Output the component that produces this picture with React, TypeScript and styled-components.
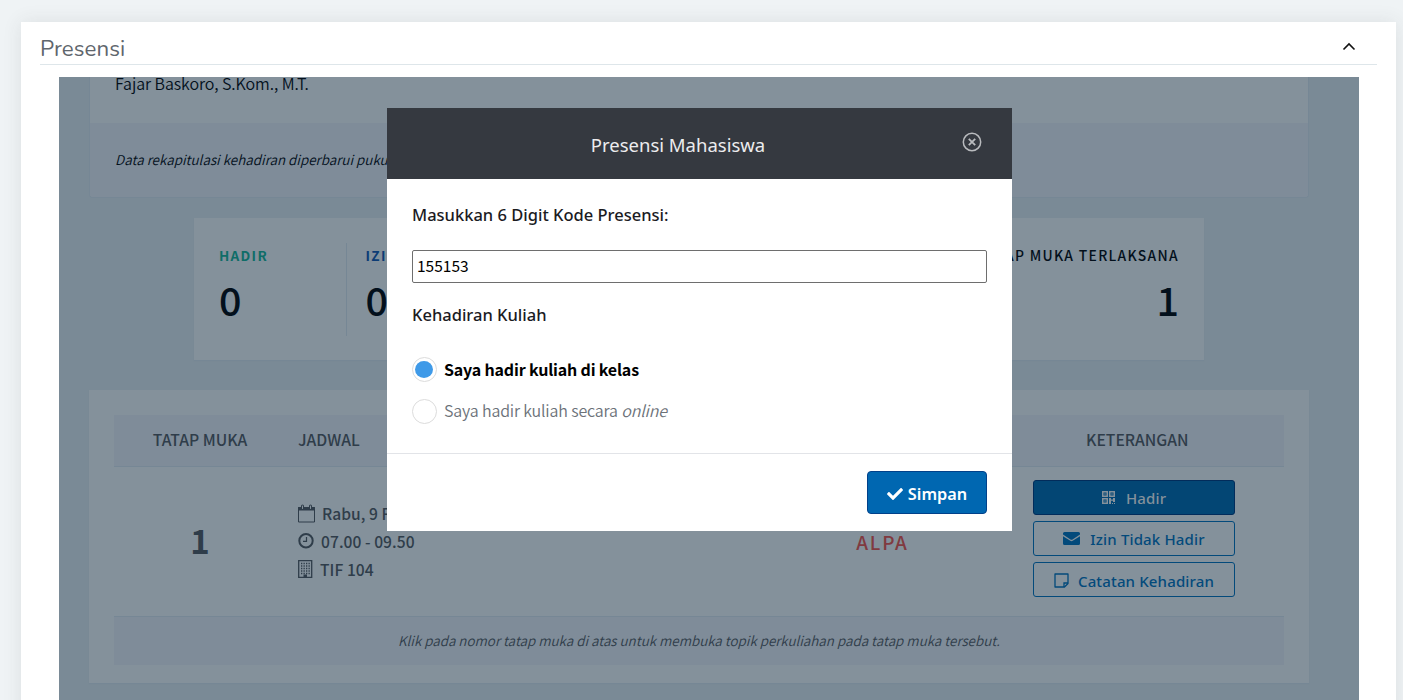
import React from "react";
import styled, { createGlobalStyle } from "styled-components";
import { FaCheck } from "react-icons/fa";

const sans = `"Noto Sans CJK SC", sans-serif`;
const ui = `"Noto Sans", "Open Sans", sans-serif`;

const GlobalStyle = createGlobalStyle`
  *, *::before, *::after { box-sizing: border-box; }
  html, body, #root { height: 100%; }
  body { margin: 0; background: #eff3f5; font-family: ${sans}; overflow: hidden; }
`;

const Page = styled.div`
  height: 100%;
  padding: 22px 7px 0 21px;
  overflow: hidden;
`;

const Panel = styled.section`
  height: 740px;
  padding: 0 19px;
  background: #fff;
  box-shadow: 0 0 18px rgba(60, 60, 60, 0.1);
`;

const PanelHeader = styled.header`
  height: 43px;
  display: flex;
  align-items: center;
  justify-content: space-between;
  padding: 9px 21px 0 0;
  border-bottom: 1px solid #dee6ea;
  svg { margin-top: -3px; }
`;

const PanelTitle = styled.h1`
  margin: 2px 0 0;
  font: 400 22.3px/32px Nunito, Lato, sans-serif;
  letter-spacing: 0.05px;
  color: #5f666d;
`;

const Viewport = styled.div`
  position: relative;
  height: 663px;
  margin: 12px 18px 0 19px;
  padding: 0 30px;
  overflow: hidden;
  background: #7a8a96;
`;

const Summary = styled.section`
  width: 1220px;
  height: 121px;
  background: #84919b;
  border: 1px solid #768795;
  border-top: 0;
  border-radius: 0 0 4px 4px;
  overflow: hidden;
`;

const Lecturer = styled.div`
  height: 46px;
  padding-left: 25px;
  font-size: 16px;
  font-weight: 350;
  line-height: 12px;
  letter-spacing: -0.07px;
  color: #03101c;
`;

const SummaryNote = styled.div`
  height: 74px;
  padding: 26px 25px;
  background: #7f8c99;
  font-size: 13.4px;
  line-height: 20px;
  letter-spacing: 0.03px;
  font-style: italic;
  font-weight: 350;
  color: #03101c;
  white-space: nowrap;
`;

const Stats = styled.section`
  display: flex;
  width: 1010px;
  height: 142px;
  margin: 20px 0 0 105px;
  padding: 25px;
  background: #84919b;
  box-shadow: 0 1px 1px #768795;
`;

const Stat = styled.div<{ $end?: boolean }>`
  width: ${(p) => (p.$end ? "auto" : "128px")};
  height: 93px;
  margin-left: ${(p) => (p.$end ? "auto" : "0")};
  margin-right: ${(p) => (p.$end ? "0" : "18.5px")};
  border-right: ${(p) => (p.$end ? "0" : "1px solid #768795")};
  text-align: ${(p) => (p.$end ? "right" : "left")};
  white-space: nowrap;
`;

const StatLabel = styled.div<{ $color: string; $strong?: boolean }>`
  height: 24px;
  font-size: ${(p) => (p.$strong ? 13.6 : 13.9)}px;
  font-weight: ${(p) => (p.$strong ? 700 : 500)};
  line-height: 24px;
  letter-spacing: 1.3px;
  color: ${(p) => p.$color};
`;

const StatValue = styled.div`
  font-size: 39.5px;
  font-weight: 500;
  line-height: 64px;
  color: #03101c;
`;

const TableCard = styled.section`
  width: 1220px;
  height: 293px;
  margin-top: 30px;
  padding: 25px;
  background: #84919b;
  box-shadow: 0 1px 1px #768795;
`;

const columns = "172px 470px 252px 1fr";

const TableHead = styled.div`
  display: grid;
  grid-template-columns: ${columns};
  align-items: center;
  height: 52px;
  padding-bottom: 2px;
  background: #7f8c99;
  border-bottom: 1px solid #768795;
  font-size: 15.7px;
  font-weight: 500;
  color: #2f3d4a;
`;

const HeadCell = styled.div<{ $align?: string; $pad?: number }>`
  padding-left: ${(p) => p.$pad ?? 0}px;
  text-align: ${(p) => p.$align ?? "center"};
  line-height: 24px;
`;

const TableRow = styled.div`
  display: grid;
  grid-template-columns: ${columns};
  align-items: center;
  height: 149px;
  padding-bottom: 3px;
  color: #2f3d4a;
`;

const Meeting = styled.div`
  text-align: center;
  font-size: 33px;
  font-weight: 700;
  line-height: 40px;
`;

const Schedule = styled.div`
  display: flex;
  flex-direction: column;
  padding: 2px 0 0 12px;
`;

const ScheduleLine = styled.div<{ $gap: number }>`
  display: flex;
  align-items: center;
  gap: ${(p) => p.$gap}px;
  height: 28px;
  font-size: 15.6px;
  font-weight: 500;
  letter-spacing: 0.05px;
`;

const Status = styled.div`
  padding: 4px 0 0 1px;
  text-align: center;
  font-size: 19px;
  font-weight: 500;
  line-height: 24px;
  letter-spacing: 1.7px;
  color: #803a40;
`;

const Actions = styled.div`
  display: flex;
  flex-direction: column;
  gap: 6px;
  width: 202px;
  margin-left: 25px;
  padding-bottom: 4px;
`;

const ActionButton = styled.button<{ $solid?: boolean; $gap: number; $drop?: number }>`
  display: flex;
  align-items: center;
  justify-content: center;
  gap: ${(p) => p.$gap}px;
  height: 35px;
  padding: ${(p) => p.$drop ?? 1}px 0 0;
  border: 1px solid ${(p) => (p.$solid ? "#022c5b" : "#034a7b")};
  border-radius: 3px;
  background: ${(p) => (p.$solid ? "#034674" : "transparent")};
  color: ${(p) => (p.$solid ? "#84919b" : "#034a7b")};
  font: 500 15px/20px ${ui};
  letter-spacing: 0.15px;
`;

const TableFooter = styled.div`
  height: 49px;
  background: #7f8c99;
  border-top: 1px solid #768795;
  text-align: center;
  font-size: 13.4px;
  font-style: italic;
  font-weight: 350;
  line-height: 47px;
  color: #2f3d4a;
`;

const Dialog = styled.div`
  position: absolute;
  top: 31px;
  left: 328px;
  width: 625px;
  height: 423px;
  background: #fff;
`;

const DialogHeader = styled.header`
  display: grid;
  grid-template-columns: 1fr auto 1fr;
  align-items: center;
  height: 71px;
  padding: 0 30px;
  background: #353940;
  color: #ececee;
`;

const DialogTitle = styled.h2`
  grid-column: 2;
  margin: 2px 0 0;
  padding-right: 43px;
  font: 400 18.5px/26px ${ui};
`;

const CloseButton = styled.button`
  justify-self: end;
  height: 20px;
  margin-top: -3px;
  padding: 0;
  border: 0;
  background: none;
  color: #b9bbbe;
`;

const DialogBody = styled.div`
  height: 274px;
  padding: 24px 25px 0;
`;

const Label = styled.label`
  display: block;
  height: 24px;
  font: 500 16.5px/24px ${ui};
  color: #1b1b1f;
`;

const CodeInput = styled.input`
  display: block;
  width: 575px;
  height: 33px;
  margin: 23px 0 20px;
  padding: 0 4px 3px;
  border: 1px solid #6e6e6e;
  border-radius: 2px;
  font: 400 15.5px ${sans};
  color: #000;
`;

const Option = styled.div<{ $active?: boolean }>`
  display: flex;
  align-items: center;
  gap: 7px;
  height: 25px;
  margin-top: ${(p) => (p.$active ? 30 : 17)}px;
  font-size: 16px;
  line-height: 23px;
  font-weight: ${(p) => (p.$active ? 700 : 350)};
  letter-spacing: ${(p) => (p.$active ? -0.17 : -0.16)}px;
  color: ${(p) => (p.$active ? "#000" : "#6c7279")};
`;

const OptionText = styled.span<{ $lift: number }>`
  padding-bottom: ${(p) => p.$lift}px;
`;

const Radio = styled.span<{ $active?: boolean }>`
  width: 25px;
  height: 25px;
  padding: 3px 2px;
  border: 1px solid #dcdcdc;
  border-radius: 50%;
  &::after {
    content: "";
    display: block;
    width: 18px;
    height: 17px;
    border-radius: 50%;
    background: ${(p) => (p.$active ? "#3f9ae8" : "transparent")};
  }
`;

const DialogFooter = styled.footer`
  display: flex;
  justify-content: flex-end;
  height: 78px;
  padding: 17px 25px;
  border-top: 1px solid #e2e4e8;
`;

const SaveButton = styled.button`
  display: flex;
  align-items: center;
  justify-content: center;
  gap: 5px;
  width: 120px;
  height: 43px;
  padding: 2px 0 0;
  border: 1px solid #01418a;
  border-radius: 4px;
  background: #0067b1;
  color: #fff;
  font: 600 16.3px/24px ${ui};
`;

const ChevronIcon = () => (
  <svg width="14" height="9" viewBox="0 0 14 9" fill="none" stroke="#111" strokeWidth="1.6">
    <path d="M1.5 7.5 7 2l5.500 5.500" />
  </svg>
);

const CloseIcon = () => (
  <svg width="20" height="20" viewBox="0 0 20 20" fill="none" stroke="currentColor" strokeWidth="1.5">
    <circle cx="10" cy="10" r="8.700" />
    <path d="m6.800 6.800 6.400 6.400M13.200 6.800l-6.400 6.400" strokeWidth="1.800" />
  </svg>
);

const CalendarIcon = () => (
  <svg width="17" height="19" viewBox="0 0 17 19" fill="none" stroke="currentColor">
    <path d="M.5 3.500h16v14.500H.5z" />
    <path d="M.5 3.500h16v2.500H.5z" fill="currentColor" />
    <path d="M4.500 2v2.500M12.500 2v2.500" strokeWidth="3" strokeLinecap="round" />
    <path d="M4.500 2v2.500M12.500 2v2.500" stroke="#84919b" strokeLinecap="round" />
  </svg>
);

const ClockIcon = () => (
  <svg width="16" height="16" viewBox="0 0 16 16" fill="none" stroke="currentColor">
    <circle cx="8" cy="7.800" r="6.700" strokeWidth="2" />
    <path d="M8.500 4v4.300H5" strokeWidth="1.200" />
  </svg>
);

const BuildingIcon = () => (
  <svg width="15" height="18" viewBox="0 0 15 18" fill="none" stroke="currentColor">
    <path d="M.7.7h13v16.600H.7z" strokeWidth="1.300" />
    <path d="M3 3.500h9M3 6h9M3 8.500h9M3 11h9M3 13.500h9" strokeDasharray="1.300 1.200" strokeWidth="1.300" />
    <path d="M5.500 14.500h3.500v3H5.500z" fill="currentColor" stroke="none" />
  </svg>
);

const QrIcon = () => (
  <svg width="13" height="13" viewBox="0 0 13 13" fill="none" stroke="currentColor" strokeWidth="1.500">
    <path d="M.75.75h4.500v4.500H.75zM7.750.75h4.500v4.500h-4.500zM.75 7.750h4.500v4.500H.75z" />
    <path d="M2.300 3h1.400M9.300 3h1.400M2.300 10h1.400" strokeWidth="1.200" />
    <path d="M7 7h2v1.500h2V7h2v4h-2V9.800H9V13H7zM10 12h1v1h-1zM12 12h1v1h-1z" fill="currentColor" stroke="none" />
  </svg>
);

const MailIcon = () => (
  <svg width="17" height="13" viewBox="0 0 17 13" fill="currentColor">
    <path d="M1.500 0h14Q17 0 17 1.500v1L9.500 7.400q-1 .6-2 0L0 2.500v-1Q0 0 1.500 0ZM0 4.200l7.300 4.600q1.200.7 2.400 0L17 4.200v7.300q0 1.500-1.500 1.500h-14Q0 13 0 11.500Z" />
  </svg>
);

const NoteIcon = () => (
  <svg width="15" height="15" viewBox="0 0 15 15" fill="none" stroke="currentColor" strokeWidth="1.300">
    <path d="M1 1h13v9.500L10.500 14H1z" strokeLinejoin="round" />
    <path d="M10 14v-4h4" />
  </svg>
);

export default function App() {
  return (
    <Page>
      <GlobalStyle />
      <Panel>
        <PanelHeader>
          <PanelTitle>Presensi</PanelTitle>
          <ChevronIcon />
        </PanelHeader>
        <Viewport>
          <Summary>
            <Lecturer>Fajar Baskoro, S.Kom., M.T.</Lecturer>
            <SummaryNote>Data rekapitulasi kehadiran diperbarui pukul</SummaryNote>
          </Summary>
          <Stats>
            <Stat>
              <StatLabel $strong $color="#0f6d68">HADIR</StatLabel>
              <StatValue>0</StatValue>
            </Stat>
            <Stat>
              <StatLabel $strong $color="#0c3c75">IZIN</StatLabel>
              <StatValue>0</StatValue>
            </Stat>
            <Stat $end>
              <StatLabel $color="#03101c">TATAP MUKA TERLAKSANA</StatLabel>
              <StatValue>1</StatValue>
            </Stat>
          </Stats>
          <TableCard>
            <TableHead>
              <HeadCell>TATAP MUKA</HeadCell>
              <HeadCell $align="left" $pad={12}>JADWAL</HeadCell>
              <HeadCell />
              <HeadCell $align="left" $pad={78}>KETERANGAN</HeadCell>
            </TableHead>
            <TableRow>
              <Meeting>1</Meeting>
              <Schedule>
                <ScheduleLine $gap={7}><CalendarIcon />Rabu, 9 Februari</ScheduleLine>
                <ScheduleLine $gap={7}><ClockIcon />07.00 - 09.50</ScheduleLine>
                <ScheduleLine $gap={7}><BuildingIcon />TIF 104</ScheduleLine>
              </Schedule>
              <Status>ALPA</Status>
              <Actions>
                <ActionButton $solid $gap={11}><QrIcon />Hadir</ActionButton>
                <ActionButton $gap={10}><MailIcon />Izin Tidak Hadir</ActionButton>
                <ActionButton $gap={9} $drop={3}><NoteIcon />Catatan Kehadiran</ActionButton>
              </Actions>
            </TableRow>
            <TableFooter>
              Klik pada nomor tatap muka di atas untuk membuka topik perkuliahan pada tatap muka tersebut.
            </TableFooter>
          </TableCard>
          <Dialog role="dialog">
            <DialogHeader>
              <DialogTitle>Presensi Mahasiswa</DialogTitle>
              <CloseButton aria-label="Tutup"><CloseIcon /></CloseButton>
            </DialogHeader>
            <DialogBody>
              <Label>Masukkan 6 Digit Kode Presensi:</Label>
              <CodeInput defaultValue="155153" />
              <Label>Kehadiran Kuliah</Label>
              <Option $active><Radio $active /><OptionText $lift={0}>Saya hadir kuliah di kelas</OptionText></Option>
              <Option><Radio /><OptionText $lift={2}>Saya hadir kuliah secara <em>online</em></OptionText></Option>
            </DialogBody>
            <DialogFooter>
              <SaveButton><FaCheck size={16} />Simpan</SaveButton>
            </DialogFooter>
          </Dialog>
        </Viewport>
      </Panel>
    </Page>
  );
}
